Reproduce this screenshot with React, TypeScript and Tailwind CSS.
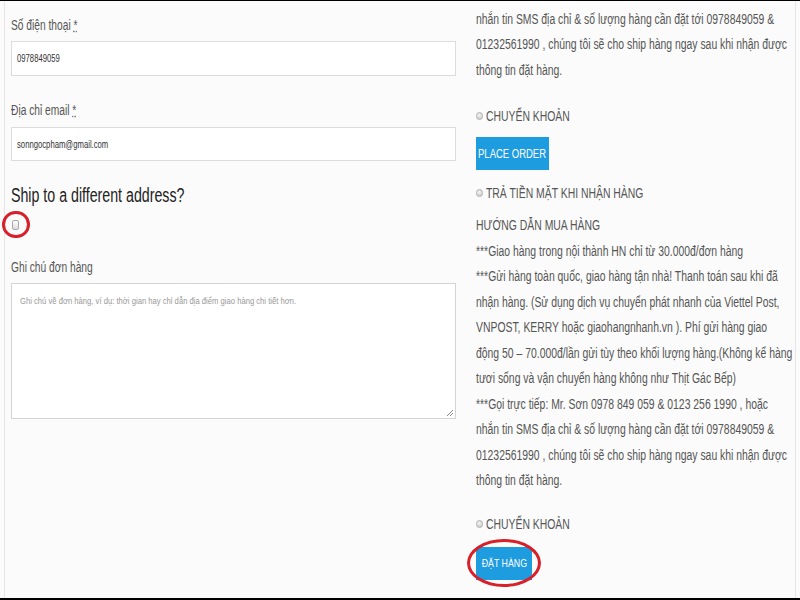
import React from "react";

const font = { fontFamily: '"Liberation Sans", Arial, sans-serif' };

function N({ children, c = "" }: { children: React.ReactNode; c?: string }) {
  return <span className={"inline-block whitespace-nowrap origin-left " + c}>{children}</span>;
}

function Radio() {
  return (
    <span className="inline-block w-[7px] h-[8px] rounded-full border border-[#b0b0b0] bg-[radial-gradient(circle_at_40%_35%,#f4f4f4,#c4c4c4)] mr-[3px] align-[1px]" />
  );
}

function Line({ children }: { children: React.ReactNode }) {
  return (
    <div className="whitespace-nowrap h-[25.5px] leading-[25.5px]">
      <N c="scale-x-[0.743]">{children}</N>
    </div>
  );
}

export default function App() {
  return (
    <div
      className="w-[800px] h-[600px] overflow-hidden bg-[#fbfbfb] border-t border-black border-b-2 text-[#555]"
      style={font}
    >
      <div className="h-full mx-[4px] border-x border-[#e6e6e6] flex pl-[6px]">
        {/* Left column */}
        <div className="w-[445px] shrink-0 pt-[14px] flex flex-col">
          <div className="text-[14px] leading-[20px] text-[#555]">
            <N c="scale-x-[0.73]">
              Số điện thoại <span className="underline decoration-dotted">*</span>
            </N>
          </div>
          <div className="mt-[6px] h-[35px] bg-white border border-[#dcdcdc] flex items-center px-[5px] text-[10px] text-[#333]">
            <N c="scale-x-[0.77]">0978849059</N>
          </div>
          <div className="mt-[24px] text-[14px] leading-[20px] text-[#555]">
            <N c="scale-x-[0.73]">
              Địa chỉ email <span className="underline decoration-dotted">*</span>
            </N>
          </div>
          <div className="mt-[7px] h-[34px] bg-white border border-[#dcdcdc] flex items-center px-[5px] text-[10px] text-[#333]">
            <N c="scale-x-[0.77]">sonngocpham@gmail.com</N>
          </div>
          <div className="mt-[22px] text-[20px] leading-[24px] text-[#222]">
            <N c="scale-x-[0.71]">Ship to a different address?</N>
          </div>
          <div className="relative h-[20px] mt-[8px]">
            <span className="absolute left-[1px] top-[5px] w-[7px] h-[10px] rounded-[2px] border border-[#a8a8a8] bg-[linear-gradient(#fff,#dcdcdc)]" />
            <span className="absolute left-[-9px] top-[-4px] w-[28px] h-[27px] rounded-full border-[3px] border-[#d8202a]" />
          </div>
          <div className="mt-[22px] text-[14px] leading-[20px] text-[#555]">
            <N c="scale-x-[0.73]">Ghi chú đơn hàng</N>
          </div>
          <div className="relative mt-[6px] h-[136px] bg-white border border-[#d4d4d4] px-[8px] pt-[11px] text-[9px] leading-[12px] text-[#999]">
            <N c="scale-x-[0.85]">
              Ghi chú về đơn hàng, ví dụ: thời gian hay chỉ dẫn địa điểm giao hàng chi tiết hơn.
            </N>
            <svg className="absolute right-[1px] bottom-[1px]" width="8" height="8" viewBox="0 0 8 8">
              <path d="M7 1 L1 7 M7 4 L4 7" stroke="#888" strokeWidth="1" />
            </svg>
          </div>
        </div>

        {/* Right column */}
        <div className="ml-[20px] flex-1 text-[14px] text-[#555] -mt-[20px]">
          <div>
            <Line>***Gọi trực tiếp: Mr. Sơn 0978 849 059 &amp; 0123 256 1990 , hoặc</Line>
            <Line>nhắn tin SMS địa chỉ &amp; số lượng hàng cần đặt tới 0978849059 &amp;</Line>
            <Line>01232561990 , chúng tôi sẽ cho ship hàng ngay sau khi nhận được</Line>
            <Line>thông tin đặt hàng.</Line>
          </div>
          <div className="mt-[23px] h-[20px] leading-[20px] whitespace-nowrap">
            <Radio />
            <N c="scale-x-[0.743]">CHUYỂN KHOẢN</N>
          </div>
          <div className="mt-[11px] w-[73px] h-[33px] bg-[#1e9ce0] text-white text-[12px] flex items-center justify-center">
            <span className="inline-block whitespace-nowrap scale-x-[0.79]">PLACE ORDER</span>
          </div>
          <div className="mt-[13px] h-[20px] leading-[20px] whitespace-nowrap">
            <Radio />
            <N c="scale-x-[0.743]">TRẢ TIỀN MẶT KHI NHẬN HÀNG</N>
          </div>
          <div className="mt-[10px]">
            <Line>HƯỚNG DẪN MUA HÀNG</Line>
            <Line>***Giao hàng trong nội thành HN chỉ từ 30.000đ/đơn hàng</Line>
            <Line>***Gửi hàng toàn quốc, giao hàng tận nhà! Thanh toán sau khi đã</Line>
            <Line>nhận hàng. (Sử dụng dịch vụ chuyển phát nhanh của Viettel Post,</Line>
            <Line>VNPOST, KERRY hoặc giaohangnhanh.vn ). Phí gửi hàng giao</Line>
            <Line>động 50 – 70.000đ/lần gửi tùy theo khối lượng hàng.(Không kể hàng</Line>
            <Line>tươi sống và vận chuyển hàng không như Thịt Gác Bếp)</Line>
            <Line>***Gọi trực tiếp: Mr. Sơn 0978 849 059 &amp; 0123 256 1990 , hoặc</Line>
            <Line>nhắn tin SMS địa chỉ &amp; số lượng hàng cần đặt tới 0978849059 &amp;</Line>
            <Line>01232561990 , chúng tôi sẽ cho ship hàng ngay sau khi nhận được</Line>
            <Line>thông tin đặt hàng.</Line>
          </div>
          <div className="mt-[20px] h-[20px] leading-[20px] whitespace-nowrap">
            <Radio />
            <N c="scale-x-[0.743]">CHUYỂN KHOẢN</N>
          </div>
          <div className="relative mt-[13px] w-[56px] h-[33px]">
            <div className="w-[56px] h-[33px] bg-[#1e9ce0] text-white text-[11px] flex items-center justify-center">
              <span className="inline-block whitespace-nowrap scale-x-[0.8]">ĐẶT HÀNG</span>
            </div>
            <span className="absolute left-[-9px] top-[-8px] w-[74px] h-[48px] rounded-[50%] border-[3px] border-[#d8202a]" />
          </div>
        </div>
      </div>
    </div>
  );
}
